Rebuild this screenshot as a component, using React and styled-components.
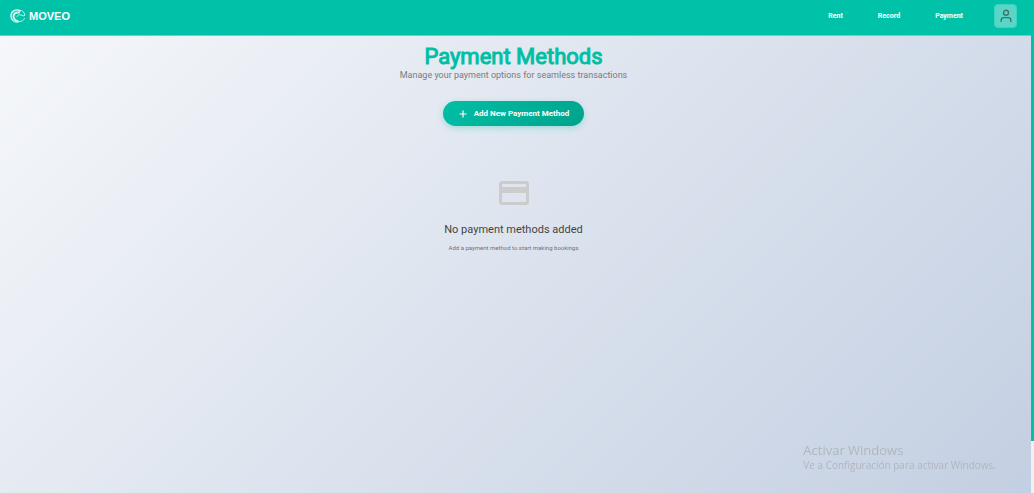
import React from "react";
import styled, { createGlobalStyle } from "styled-components";

const GlobalStyle = createGlobalStyle`
  * { box-sizing: border-box; }
  body {
    margin: 0;
    font-family: Roboto, "Liberation Sans", sans-serif;
  }
`;

const Page = styled.div`
  display: flex;
  min-height: 100vh;
`;

const Column = styled.div`
  flex: 1;
  display: flex;
  flex-direction: column;
`;

const ScrollTrack = styled.div`
  width: 3px;
  background: #f1f1f1;
`;

const ScrollThumb = styled.div`
  height: 441px;
  max-height: 90vh;
  background: #00c2a8;
`;

const Header = styled.header`
  display: flex;
  align-items: center;
  justify-content: space-between;
  height: 36px;
  padding: 0 14px 3px 10px;
  border-bottom: 1px solid #5fd6c8;
  background: #00c2a8;
`;

const Brand = styled.a`
  display: flex;
  align-items: center;
  gap: 3px;
  color: #fff;
  font: bold 11px/16px "Liberation Sans", sans-serif;
  text-decoration: none;
`;

const Nav = styled.nav`
  display: flex;
  align-items: center;
  gap: 35px;
`;

const NavLink = styled.a`
  color: #fff;
  font-size: 7px;
  font-weight: 700;
  text-decoration: none;
`;

const ProfileButton = styled.button`
  display: flex;
  align-items: center;
  justify-content: center;
  width: 23px;
  height: 24px;
  margin-left: -4px;
  padding: 0;
  border: 1px solid #40d1be;
  border-radius: 4px;
  background: #59d7c6;
  color: #44716d;
`;

const Main = styled.main`
  flex: 1;
  display: flex;
  flex-direction: column;
  align-items: center;
  padding: 9px 4px 0 0;
  background: linear-gradient(135deg, #f5f7fa 0%, #c3cfe2 100%);
  text-align: center;
`;

const Title = styled.h1`
  margin: 0;
  color: #00bfa5;
  font-size: 22px;
  line-height: 24px;
  font-weight: 400;
  -webkit-text-stroke: 1px #00bfa5;
`;

const Subtitle = styled.p`
  margin: 0;
  color: #777b80;
  font-size: 9px;
  line-height: 12px;
`;

const AddButton = styled.button`
  display: flex;
  align-items: center;
  justify-content: center;
  gap: 6px;
  height: 25px;
  margin-top: 20px;
  padding: 0 15px;
  border: 0;
  border-radius: 13px;
  background: linear-gradient(135deg, #00bfa5, #00a38d);
  box-shadow: 0 2px 6px rgba(0, 191, 165, 0.3);
  color: #fff;
  font: bold 8px/12px Roboto, sans-serif;
`;

const EmptyState = styled.section`
  display: flex;
  flex-direction: column;
  align-items: center;
  margin-top: 49px;
`;

const EmptyTitle = styled.h2`
  margin: 11px 0 0;
  color: #444;
  font-size: 11px;
  line-height: 16px;
  font-weight: 400;
`;

const EmptyText = styled.p`
  margin: 5px 0 0;
  color: #6f7378;
  font-size: 6px;
  line-height: 10px;
`;

const Notice = styled.aside`
  position: fixed;
  right: 38px;
  bottom: 21px;
  color: #b1b6be;
  font-family: "Open Sans", "Noto Sans", sans-serif;
`;

const NoticeTitle = styled.div`
  font-size: 13px;
  line-height: 16px;
`;

const NoticeText = styled.div`
  font-size: 10px;
  line-height: 14px;
`;

function Logo() {
  return (
    <svg width="16" height="14" viewBox="0 0 32 28" fill="none" stroke="#c9f2ec" strokeLinecap="round" aria-hidden="true">
      <path d="M20 3C10 0 2 5 2 14c0 7 5 12 13 12" strokeWidth="3" />
      <path d="M18 7c-7-1-11 3-11 8 0 5 4 8 9 10" strokeWidth="4" />
      <path d="M18 5l5-2 4 3 3 6-2 2-6-2c-4-1-7 0-8 3" strokeWidth="2" />
      <path d="M19 25c5 0 8-2 10-6" strokeWidth="2" />
    </svg>
  );
}

function UserIcon() {
  return (
    <svg width="12" height="14" viewBox="0 0 12 14" fill="none" stroke="currentColor" strokeWidth="1.4" strokeLinecap="round" aria-hidden="true">
      <circle cx="6" cy="3.7" r="2.5" />
      <path d="M1.2 12.4v-1.2c0-1.7 1-2.6 2.6-2.6h4.4c1.6 0 2.6.9 2.6 2.6v1.2" />
    </svg>
  );
}

function PlusIcon() {
  return (
    <svg width="10" height="10" viewBox="0 0 10 10" stroke="currentColor" strokeWidth="1.2" aria-hidden="true">
      <path d="M5 1.5v7M1.5 5h7" />
    </svg>
  );
}

function CardIcon() {
  return (
    <svg width="36" height="36" viewBox="0 0 24 24" fill="#ccc" aria-hidden="true">
      <path d="M20 4H4c-1.11 0-1.99.89-1.99 2L2 18c0 1.11.89 2 2 2h16c1.11 0 2-.89 2-2V6c0-1.11-.89-2-2-2zm0 14H4v-6h16v6zm0-10H4V6h16v2z" />
    </svg>
  );
}

export default function App() {
  return (
    <>
      <GlobalStyle />
      <Page>
        <Column>
          <Header>
            <Brand href="#"><Logo />MOVEO</Brand>
            <Nav>
              <NavLink href="#rent">Rent</NavLink>
              <NavLink href="#record">Record</NavLink>
              <NavLink href="#payment">Payment</NavLink>
              <ProfileButton type="button" aria-label="Profile"><UserIcon /></ProfileButton>
            </Nav>
          </Header>
          <Main>
            <Title>Payment Methods</Title>
            <Subtitle>Manage your payment options for seamless transactions</Subtitle>
            <AddButton type="button"><PlusIcon />Add New Payment Method</AddButton>
            <EmptyState>
              <CardIcon />
              <EmptyTitle>No payment methods added</EmptyTitle>
              <EmptyText>Add a payment method to start making bookings</EmptyText>
            </EmptyState>
          </Main>
        </Column>
        <ScrollTrack><ScrollThumb /></ScrollTrack>
      </Page>
      <Notice>
        <NoticeTitle>Activar Windows</NoticeTitle>
        <NoticeText>Ve a Configuración para activar Windows.</NoticeText>
      </Notice>
    </>
  );
}
